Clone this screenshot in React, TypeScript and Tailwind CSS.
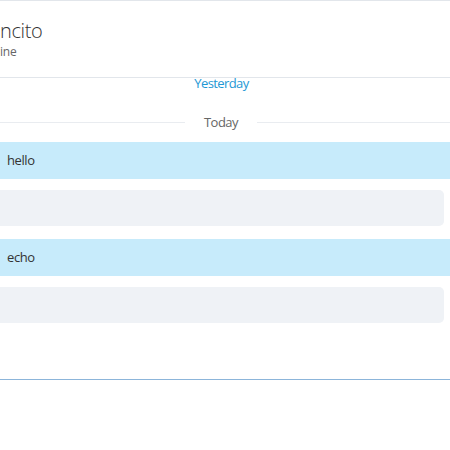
const FONT = { fontFamily: '"Open Sans", "Noto Sans", sans-serif' };

type Msg = { text: string; mine: boolean; mt: string };

const messages: Msg[] = [
  { text: 'hello', mine: true, mt: 'mt-[11px]' },
  { text: '', mine: false, mt: 'mt-[11px]' },
  { text: 'echo', mine: true, mt: 'mt-[13px]' },
  { text: '', mine: false, mt: 'mt-[11px]' },
];

function Bubble({ msg }: { msg: Msg }) {
  if (msg.mine) {
    return (
      <div className={`${msg.mt} h-[37px] bg-[#c7ebfb] flex items-center pl-[7px] text-[13px] tracking-[-0.4px] text-[#333]`}>
        {msg.text}
      </div>
    );
  }
  return (
    <div className={`${msg.mt} h-[36px] -ml-[10px] mr-[6px] rounded-[5px] bg-[#eff2f6] flex items-center pl-[17px] text-[13px] text-[#333]`}>
      {msg.text}
    </div>
  );
}

export default function App() {
  return (
    <div className="w-[450px] h-[450px] bg-white overflow-hidden flex flex-col" style={FONT}>
      {/* Conversation header */}
      <div className="h-[78px] border-t border-b border-[#e2e6eb] pt-[16px] shrink-0">
        <div className="text-[20px] leading-[28px] font-light tracking-[-0.4px] text-[#333]">ncito</div>
        <div className="-mt-[1px] text-[12px] leading-[16px] tracking-[-0.2px] text-[#666]">ine</div>
      </div>

      <div className="pr-[7px] text-center text-[13px] leading-[11px] tracking-[-0.6px] text-[#1e98d4]">Yesterday</div>

      {/* Day separator */}
      <div className="mt-[24px] flex items-center">
        <div className="grow basis-0 h-px bg-[#e9ecf0]" />
        <div className="px-[19px] text-[13px] leading-[18px] tracking-[-0.5px] text-[#666]">Today</div>
        <div className="grow basis-[8px] h-px bg-[#e9ecf0]" />
      </div>

      {messages.map((m, i) => (
        <Bubble key={i} msg={m} />
      ))}

      <div className="h-[56px] shrink-0" />
      <div className="h-px bg-[#8cb5da] shrink-0" />
      <div className="flex-1 bg-white" />
    </div>
  );
}
